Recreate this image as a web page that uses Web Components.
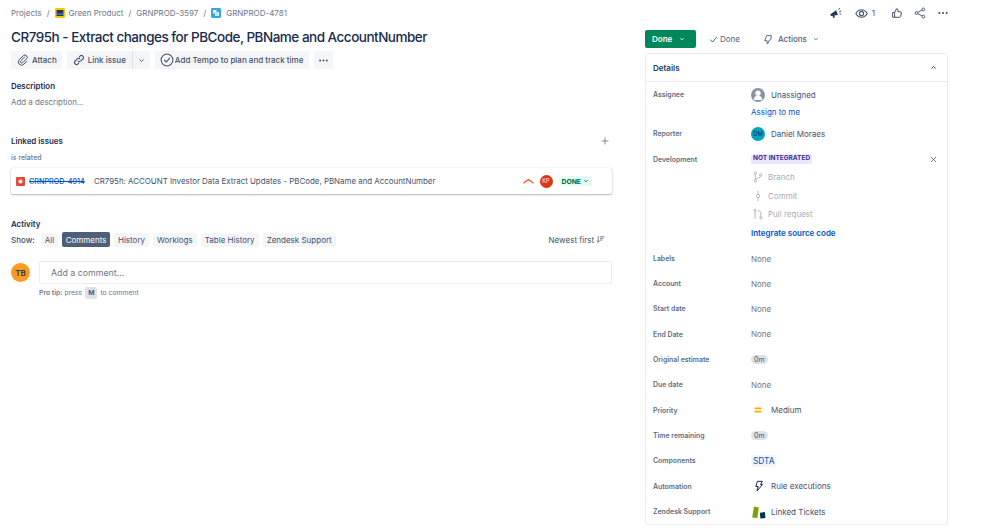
<!DOCTYPE html>
<html>
<head>
<meta charset="utf-8">
<title>GRNPROD-4781</title>
<style>
    html, body { margin: 0; padding: 0; background: #fff; }
    body { font-family: Inter, "Liberation Sans", sans-serif; color: #172b4d; }
</style>
</head>
<body>
<issue-page>
    <issue-main slot="main"></issue-main>
    <issue-side slot="side"></issue-side>
</issue-page>

<script>
const ICONS = {
    clip: '<path d="M11.500 4.500 5.600 10.400a2 2 0 0 0 2.800 2.800l6-6a3.400 3.400 0 0 0-4.800-4.800L3.400 8.600a4.800 4.800 0 0 0 6.800 6.800l4.300-4.300" fill="none" stroke="currentColor" stroke-width="1.500" stroke-linecap="round"/>',
    link: '<path d="M7.500 10.500a3 3 0 0 0 4.300 0l3-3a3 3 0 0 0-4.300-4.300L9.400 4.300M10.500 7.500a3 3 0 0 0-4.300 0l-3 3a3 3 0 0 0 4.300 4.300l1.100-1.100" fill="none" stroke="currentColor" stroke-width="1.600" stroke-linecap="round"/>',
    chevronDown: '<path d="M5.500 7.500 9 11l3.500-3.500" fill="none" stroke="currentColor" stroke-width="1.800" stroke-linecap="round" stroke-linejoin="round"/>',
    chevronUp: '<path d="M5.500 10.500 9 7l3.500 3.500" fill="none" stroke="currentColor" stroke-width="1.800" stroke-linecap="round" stroke-linejoin="round"/>',
    tempo: '<circle cx="9" cy="9" r="7.600" fill="none" stroke="currentColor" stroke-width="1.300"/><path d="M5.600 9.200 8 11.600l4.400-5" fill="none" stroke="currentColor" stroke-width="1.400" stroke-linecap="round" stroke-linejoin="round"/>',
    dots: '<circle cx="3.500" cy="9" r="1.600" fill="currentColor"/><circle cx="9" cy="9" r="1.600" fill="currentColor"/><circle cx="14.500" cy="9" r="1.600" fill="currentColor"/>',
    plus: '<path d="M9 3.500v11M3.500 9h11" fill="none" stroke="currentColor" stroke-width="1.500" stroke-linecap="round"/>',
    close: '<path d="M4.500 4.500l9 9M13.500 4.500l-9 9" fill="none" stroke="currentColor" stroke-width="1.500" stroke-linecap="round"/>',
    check: '<path d="M3 9.800 7 14l8-9.500" fill="none" stroke="currentColor" stroke-width="1.900" stroke-linecap="round" stroke-linejoin="round"/>',
    actions: '<path d="M8 2.500h7.200l-.6 6.500-3.300 1.700-1.500 5-1.800-.6.6-3.800-4.300-.7z" fill="none" stroke="currentColor" stroke-width="1.500" stroke-linejoin="round"/>',
    bolt: '<path d="M6.500 2h7.500l-2.800 4.800h3L6 16.500l1.800-6.700H4.200z" fill="none" stroke="currentColor" stroke-width="1.500" stroke-linejoin="round"/>',
    megaphone: '<path d="M1.500 10.500 10 4.500l2.400 6.500-5 .6.6 3.200-2 .6-1.200-3.400-2.100.5z" fill="currentColor"/><path d="M13.500 3.500l1-1.500M14.500 6.500l2-.8M15 9.500l1.500.4" fill="none" stroke="currentColor" stroke-width="1.200" stroke-linecap="round"/>',
    eye: '<path d="M1.200 9C3 5.600 5.800 3.900 9 3.900s6 1.700 7.800 5.100c-1.800 3.400-4.600 5.100-7.800 5.100S3 12.400 1.200 9z" fill="none" stroke="currentColor" stroke-width="1.500"/><circle cx="9" cy="9" r="2.900" fill="none" stroke="currentColor" stroke-width="1.500"/>',
    thumb: '<path d="M5.500 8.200 8.400 2.400c1.300 0 2 .9 2 2v2.800h3.800c1 0 1.600.9 1.400 1.800l-1.200 5.200c-.2.800-.8 1.200-1.500 1.200H5.500zM5.500 8.200H2.500v7.200h3" fill="none" stroke="currentColor" stroke-width="1.500" stroke-linejoin="round"/>',
    share: '<circle cx="3.800" cy="9" r="2.100" fill="none" stroke="currentColor" stroke-width="1.400"/><circle cx="14" cy="3.600" r="2.100" fill="none" stroke="currentColor" stroke-width="1.400"/><circle cx="14" cy="14.400" r="2.100" fill="none" stroke="currentColor" stroke-width="1.400"/><path d="M5.700 8 12.100 4.600M5.700 10 12.100 13.400" fill="none" stroke="currentColor" stroke-width="1.400"/>',
    branch: '<circle cx="5" cy="3.400" r="1.700" fill="none" stroke="currentColor" stroke-width="1.300"/><circle cx="5" cy="14.600" r="1.700" fill="none" stroke="currentColor" stroke-width="1.300"/><circle cx="13" cy="6" r="1.700" fill="none" stroke="currentColor" stroke-width="1.300"/><path d="M5 5.100v7.800M13 7.700c0 2.600-5 2.300-8 5" fill="none" stroke="currentColor" stroke-width="1.300"/>',
    commit: '<circle cx="9" cy="9" r="2.500" fill="none" stroke="currentColor" stroke-width="1.300"/><path d="M9 1.500v5M9 11.500v5" fill="none" stroke="currentColor" stroke-width="1.300"/>',
    pull: '<circle cx="4.600" cy="3.400" r="1.700" fill="none" stroke="currentColor" stroke-width="1.300"/><circle cx="13.400" cy="14.600" r="1.700" fill="none" stroke="currentColor" stroke-width="1.300"/><path d="M4.600 5.100v11M13.400 12.900V7.500c0-2-1.200-3-3-3H9" fill="none" stroke="currentColor" stroke-width="1.300"/>',
    sort: '<path d="M4.500 3v11M2.200 11.600 4.500 14l2.300-2.400M9 3.500h7M9 6.800h5M9 10.100h3" fill="none" stroke="currentColor" stroke-width="1.400" stroke-linecap="round" stroke-linejoin="round"/>'
};

function icon(name, size) {
    return `<svg viewBox="0 0 18 18" width="${size}" height="${size}" aria-hidden="true">${ICONS[name]}</svg>`;
}

class IssuePage extends HTMLElement {
    constructor() {
        super();
        this.attachShadow({ mode: 'open' });
        this.shadowRoot.innerHTML = `
            <style>
                :host { display: flex; width: 999px; height: 528px; overflow: hidden; box-sizing: border-box; padding-left: 11px; }
                .main { display: block; width: 601px; margin-right: 33px; flex: none; }
                .side { display: block; width: 304px; flex: none; }
            </style>
            <div class="main"><slot name="main"></slot></div>
            <div class="side"><slot name="side"></slot></div>
        `;
    }
}

class IssueBreadcrumbs extends HTMLElement {
    constructor() {
        super();
        this.attachShadow({ mode: 'open' });
        this.shadowRoot.innerHTML = `
            <style>
                :host { display: flex; align-items: center; height: 12px; font-size: 8px; color: #6b778c; white-space: nowrap; }
                .sep { margin: 0 5px; }
                .ic { margin-right: 4px; display: block; }
            </style>
            <span>Projects</span><span class="sep">/</span>
            <svg class="ic" viewBox="0 0 10 10" width="10" height="10"><rect width="10" height="10" rx="1.400" fill="#ffc400"/><rect x="1.600" y="2" width="6.800" height="6" fill="#253858"/><rect x="1.600" y="5.500" width="6.800" height="1" fill="#4c9aff"/></svg>
            <span>Green Product</span><span class="sep">/</span>
            <span>GRNPROD-3597</span><span class="sep">/</span>
            <svg class="ic" style="margin-right:5px" viewBox="0 0 10 10" width="10" height="10"><rect width="10" height="10" rx="1.400" fill="#2ea8e6"/><rect x="2" y="2" width="3.400" height="3.400" fill="#fff"/><rect x="4" y="4" width="4" height="4" fill="#cfeaf8"/></svg>
            <span>GRNPROD-4781</span>
        `;
    }
}

class ToolBtn extends HTMLElement {
    constructor() {
        super();
        this.attachShadow({ mode: 'open' });
        this.shadowRoot.innerHTML = `
            <style>
                :host { display: inline-flex; align-items: center; gap: 3px; height: 18px; padding: 0 6px; box-sizing: border-box; background: #f4f5f7; border-radius: 2px; font-size: 8px; font-weight: 500; color: #42526e; white-space: nowrap; }
                ::slotted(svg) { display: block; }
            </style>
            <slot></slot>
        `;
    }
}

class SectionTitle extends HTMLElement {
    constructor() {
        super();
        this.attachShadow({ mode: 'open' });
        this.shadowRoot.innerHTML = `
            <style>
                :host { display: block; font-size: 7.900px; font-weight: 600; color: #172b4d; line-height: 12px; }
            </style>
            <slot></slot>
        `;
    }
}

class LinkedIssue extends HTMLElement {
    constructor() {
        super();
        this.attachShadow({ mode: 'open' });
        this.shadowRoot.innerHTML = `
            <style>
                :host { display: flex; align-items: center; height: 26px; box-sizing: border-box; border-radius: 2px; background: #fff; box-shadow: 0 1px 2px rgba(9,30,66,.3), 0 0 1px rgba(9,30,66,.25); padding: 0 20px 0 5px; font-size: 7.900px; color: #42526e; white-space: nowrap; }
                .type { display: block; margin-right: 4px; flex: none; }
                .key { color: #0052cc; text-decoration: line-through; font-size: 7.200px; font-weight: 500; width: 65px; flex: none; }
                .sum { flex: 1; }
                .prio { display: block; margin-right: 6px; }
                .av { width: 13px; height: 13px; border-radius: 50%; background: #de350b; color: #fff; font-size: 5.600px; display: flex; align-items: center; justify-content: center; margin-right: 7px; }
                .st { display: flex; align-items: center; gap: 1px; height: 10px; padding: 0 2px; background: #e3fcef; color: #006644; border-radius: 2px; font-size: 6.800px; font-weight: 700; }
            </style>
            <svg class="type" viewBox="0 0 9 9" width="9" height="9"><rect width="9" height="9" rx="1" fill="#e5493a"/><circle cx="4.500" cy="4.500" r="2" fill="#fff"/></svg>
            <span class="key">GRNPROD-4914</span>
            <span class="sum">CR795h: ACCOUNT Investor Data Extract Updates - PBCode, PBName and AccountNumber</span>
            <svg class="prio" viewBox="0 0 12 8" width="11" height="8"><path d="M1 6c1.500-1 3-2.200 5-3.500C8 3.800 9.500 5 11 6" fill="none" stroke="#ff5630" stroke-width="1.500" stroke-linecap="round"/></svg>
            <span class="av">KP</span>
            <span class="st">DONE <svg viewBox="0 0 18 18" width="8" height="8" style="color:#006644">${ICONS.chevronDown}</svg></span>
        `;
    }
}

class FilterChip extends HTMLElement {
    constructor() {
        super();
        this.attachShadow({ mode: 'open' });
        this.shadowRoot.innerHTML = `
            <style>
                :host { display: inline-flex; align-items: center; height: 14px; padding: 0 4px; background: #f4f5f7; color: #42526e; border-radius: 2px; font-size: 8px; white-space: nowrap; }
                :host([active]) { background: #505f79; color: #fff; height: 15px; padding: 0 3.500px; }
            </style>
            <slot></slot>
        `;
    }
}

class IssueMain extends HTMLElement {
    constructor() {
        super();
        this.attachShadow({ mode: 'open' });
        this.shadowRoot.innerHTML = `
            <style>
                :host { display: block; padding-top: 7px; }
                h1 { margin: 8px 0 0; font-size: 13.500px; line-height: 20px; font-weight: 500; color: #172b4d; white-space: nowrap; letter-spacing: -0.5px; }
                .toolbar { display: flex; gap: 5px; margin-top: 4px; }
                .split { display: flex; }
                .split tool-btn:first-child { border-right: 1px solid #dfe1e6; border-radius: 2px 0 0 2px; }
                .split tool-btn:last-child { padding: 0 4px; border-radius: 0 2px 2px 0; }
                .desc { margin-top: 11px; }
                .placeholder { margin-top: 4px; font-size: 7.900px; line-height: 12px; color: #6b778c; }
                .linked-head { display: flex; justify-content: space-between; align-items: center; margin-top: 27px; padding-right: 2px; }
                .linked-head svg { color: #6b778c; display: block; }
                .rel { margin-top: 5px; font-size: 7px; font-weight: 500; line-height: 12px; color: #6b778c; }
                linked-issue { margin-top: 4px; }
                .activity { margin-top: 24px; }
                .show { display: flex; align-items: center; gap: 4px; margin-top: 2px; height: 15px; font-size: 8px; color: #42526e; }
                .show .lbl { margin-right: 2px; font-weight: 500; }
                .sort { margin-left: auto; margin-right: 7px; display: flex; align-items: center; gap: 2px; }
                .comment { display: flex; gap: 9px; margin-top: 14px; }
                .avatar { width: 19px; height: 19px; border-radius: 50%; background: #ff991f; color: #253858; font-size: 8px; font-weight: 600; display: flex; align-items: center; justify-content: center; flex: none; margin-top: 2px; }
                .input { flex: 1; height: 23px; box-sizing: border-box; border: 1px solid #ebecf0; border-radius: 2px; padding-left: 11px; display: flex; align-items: center; font-size: 8.800px; color: #6b778c; }
                .tip { margin: 3px 0 0 28px; font-size: 6.800px; line-height: 12px; color: #6b778c; display: flex; align-items: center; gap: 2px; white-space: nowrap; }
                .tip b { font-weight: 600; }
                .tip kbd { font: inherit; font-weight: 600; background: #dfe1e6; color: #42526e; border-radius: 2px; padding: 0 3px; margin: 0 1px; }
            </style>
            <issue-breadcrumbs></issue-breadcrumbs>
            <h1>CR795h - Extract changes for PBCode, PBName and AccountNumber</h1>
            <div class="toolbar">
                <tool-btn style="padding-right:5px">${icon('clip', 12)}Attach</tool-btn>
                <div class="split">
                    <tool-btn>${icon('link', 12)}Link issue</tool-btn>
                    <tool-btn>${icon('chevronDown', 9)}</tool-btn>
                </div>
                <tool-btn style="padding:0 6px 0 5px;gap:1px">${icon('tempo', 14)}Add Tempo to plan and track time</tool-btn>
                <tool-btn style="padding:0 4px">${icon('dots', 11)}</tool-btn>
            </div>
            <section-title class="desc">Description</section-title>
            <div class="placeholder">Add a description...</div>
            <div class="linked-head">
                <section-title>Linked issues</section-title>
                ${icon('plus', 10)}
            </div>
            <div class="rel">is related</div>
            <linked-issue></linked-issue>
            <section-title class="activity">Activity</section-title>
            <div class="show">
                <span class="lbl">Show:</span>
                <filter-chip>All</filter-chip>
                <filter-chip active>Comments</filter-chip>
                <filter-chip>History</filter-chip>
                <filter-chip>Worklogs</filter-chip>
                <filter-chip>Table History</filter-chip>
                <filter-chip>Zendesk Support</filter-chip>
                <span class="sort">Newest first ${icon('sort', 9)}</span>
            </div>
            <div class="comment">
                <div class="avatar">TB</div>
                <div class="input">Add a comment...</div>
            </div>
            <div class="tip"><b>Pro tip:</b> press <kbd>M</kbd> to comment</div>
        `;
    }
}

class DetailRow extends HTMLElement {
    constructor() {
        super();
        this.attachShadow({ mode: 'open' });
        this.shadowRoot.innerHTML = `
            <style>
                :host { display: grid; grid-template-columns: 98px 1fr; min-height: 25.300px; align-items: start; font-size: 8px; color: #42526e; padding-left: 7px; padding-right: 8px; box-sizing: border-box; }
                .label { font-size: 6.900px; font-weight: 600; color: #5e6c84; line-height: 25.300px; height: 25.300px; white-space: nowrap; }
                .value { min-height: 25.300px; display: flex; flex-direction: column; justify-content: flex-start; min-width: 0; }
            </style>
            <div class="label"></div>
            <div class="value"><slot></slot></div>
        `;
        this.shadowRoot.querySelector('.label').textContent = this.getAttribute('label');
    }
}

class IssueSide extends HTMLElement {
    constructor() {
        super();
        this.attachShadow({ mode: 'open' });
        this.shadowRoot.innerHTML = `
            <style>
                :host { display: block; padding-top: 4px; }
                .top { display: flex; justify-content: flex-end; align-items: center; height: 18px; color: #42526e; font-size: 8px; }
                .top svg { display: block; }
                .status { display: flex; align-items: center; height: 18px; margin-top: 8px; font-size: 8px; color: #505f79; }
                .done-btn { display: flex; align-items: center; gap: 6px; background: #00875a; color: #fff; font-weight: 600; height: 18px; width: 51px; box-sizing: border-box; padding-left: 7px; border-radius: 2px; }
                .resolved { display: flex; align-items: center; gap: 2px; margin-left: 13px; }
                .resolved svg { color: #00875a; }
                .actions { display: flex; align-items: center; gap: 5px; margin-left: 22px; font-weight: 500; }
                .panel { margin-top: 5px; border: 1px solid #ebecf0; border-radius: 3px; height: 472px; box-sizing: border-box; width: 303px; overflow: hidden; }
                .head { display: flex; align-items: center; justify-content: space-between; height: 27px; border-bottom: 1px solid #ebecf0; padding: 0 9px 0 7px; font-size: 8px; font-weight: 600; color: #253858; }
                .line { display: flex; align-items: center; height: 25.300px; gap: 6px; white-space: nowrap; }
                .line svg { display: block; flex: none; }
                a { color: #0052cc; text-decoration: none; }
                .none { color: #6b778c; }
                .assign { height: 11px; line-height: 11px; margin-bottom: 3px; }
                .av { width: 14px; height: 14px; border-radius: 50%; flex: none; display: flex; align-items: center; justify-content: center; font-size: 5.800px; overflow: hidden; }
                .av.un { background: #8993a4; }
                .av.dm { background: #00a3bf; color: #172b4d; }
                .lozenge { display: inline-block; background: #eae6ff; color: #403294; font-size: 6.500px; font-weight: 700; padding: 0 2px; border-radius: 2px; line-height: 9.500px; }
                .dev-top { display: flex; justify-content: space-between; align-items: center; height: 25.300px; padding-right: 1px; }
                .dev-top svg { color: #42526e; display: block; }
                .dev-item { display: flex; align-items: center; height: 18.500px; gap: 4px; color: #a5adba; padding-left: 1px; }
                .dev-item svg { display: block; color: #a5adba; }
                .dev-list { margin-top: -4px; margin-bottom: 3px; }
                .dev-link { display: block; height: 18.500px; line-height: 18.500px; margin-top: 1px; font-weight: 600; }
                .pill { display: inline-block; background: #dfe1e6; border-radius: 6px; padding: 0 3px; line-height: 9px; font-size: 7px; color: #42526e; }
                .sdta { display: inline-block; background: #f4f5f7; color: #0052cc; padding: 0 2px; border-radius: 2px; line-height: 12px; font-size: 8.300px; }
            </style>
            <div class="top">
                <span style="color:#253858;margin-right:13px">${icon('megaphone', 13)}</span>
                ${icon('eye', 13)}<span style="margin:0 16px 0 4px">1</span>
                <span style="margin-right:11px">${icon('thumb', 12)}</span>
                <span style="margin-right:11px">${icon('share', 12)}</span>
                <span>${icon('dots', 12)}</span>
            </div>
            <div class="status">
                <div class="done-btn">Done ${icon('chevronDown', 8)}</div>
                <div class="resolved">${icon('check', 9)}<span>Done</span></div>
                <div class="actions">${icon('actions', 11)}<span>Actions</span>${icon('chevronDown', 8)}</div>
            </div>
            <div class="panel">
                <div class="head"><span>Details</span>${icon('chevronUp', 9)}</div>
                <div class="body">
                    <detail-row label="Assignee">
                        <div class="line"><span class="av un"><svg viewBox="0 0 14 14" width="14" height="14"><circle cx="7" cy="5.200" r="2.600" fill="#fff"/><path d="M2.800 12c0-3 1.800-4.600 4.200-4.600s4.200 1.600 4.200 4.600z" fill="#fff"/></svg></span>Unassigned</div>
                        <a class="assign" href="#">Assign to me</a>
                    </detail-row>
                    <detail-row label="Reporter"><div class="line"><span class="av dm">DM</span>Daniel Moraes</div></detail-row>
                    <detail-row label="Development">
                        <div class="dev-top"><span class="lozenge">NOT INTEGRATED</span>${icon('close', 9)}</div>
                        <div class="dev-list">
                            <div class="dev-item">${icon('branch', 12)}Branch</div>
                            <div class="dev-item">${icon('commit', 12)}Commit</div>
                            <div class="dev-item">${icon('pull', 12)}Pull request</div>
                            <a class="dev-link" href="#">Integrate source code</a>
                        </div>
                    </detail-row>
                    <detail-row label="Labels"><div class="line none">None</div></detail-row>
                    <detail-row label="Account"><div class="line none">None</div></detail-row>
                    <detail-row label="Start date"><div class="line none">None</div></detail-row>
                    <detail-row label="End Date"><div class="line none">None</div></detail-row>
                    <detail-row label="Original estimate"><div class="line"><span class="pill">0m</span></div></detail-row>
                    <detail-row label="Due date"><div class="line none">None</div></detail-row>
                    <detail-row label="Priority"><div class="line"><svg viewBox="0 0 14 14" width="14" height="14"><rect x="3.500" y="4.500" width="7" height="1.700" rx=".6" fill="#ffab00"/><rect x="3.500" y="7.800" width="7" height="1.700" rx=".6" fill="#ffab00"/></svg>Medium</div></detail-row>
                    <detail-row label="Time remaining"><div class="line"><span class="pill">0m</span></div></detail-row>
                    <detail-row label="Components"><div class="line"><span class="sdta">SDTA</span></div></detail-row>
                    <detail-row label="Automation"><div class="line"><span style="color:#172b4d;margin:0 0 0 2px">${icon('bolt', 12)}</span>Rule executions</div></detail-row>
                    <detail-row label="Zendesk Support"><div class="line"><svg viewBox="0 0 14 14" width="14" height="14" style="overflow:visible"><path d="M1.200 12.500 3 1.500 7.800 2.600 6.300 12.900z" fill="#78a300"/><path d="M8.800 7.800 14 7l.4 6-5 .6z" fill="#03363d"/></svg>Linked Tickets</div></detail-row>
                </div>
            </div>
        `;
    }
}

customElements.define('tool-btn', ToolBtn);
customElements.define('section-title', SectionTitle);
customElements.define('filter-chip', FilterChip);
customElements.define('issue-breadcrumbs', IssueBreadcrumbs);
customElements.define('linked-issue', LinkedIssue);
customElements.define('detail-row', DetailRow);
customElements.define('issue-main', IssueMain);
customElements.define('issue-side', IssueSide);
customElements.define('issue-page', IssuePage);
</script>
</body>
</html>
